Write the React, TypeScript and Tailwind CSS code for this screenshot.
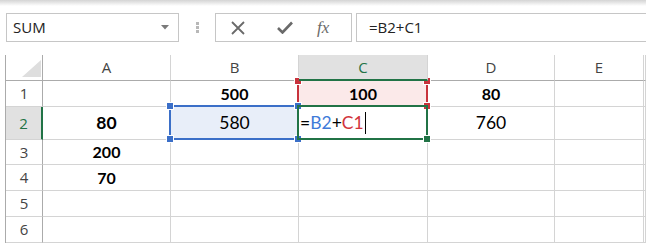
import React from "react"

const cols = ["A", "B", "C", "D", "E", ""]
const rowHeights = ["h-[26px]", "h-[33px]", "h-[25px]", "h-[26px]", "h-[26px]", "h-[26px]"]

// values per row, index = column
const data: Record<number, Record<number, { v: string; bold?: boolean }>> = {
  0: { 1: { v: "500", bold: true }, 2: { v: "100", bold: true }, 3: { v: "80", bold: true } },
  1: { 0: { v: "80", bold: true }, 1: { v: "580" }, 3: { v: "760" } },
  2: { 0: { v: "200", bold: true } },
  3: { 0: { v: "70", bold: true } },
}

const uiFont = { fontFamily: '"Open Sans", "Noto Sans", sans-serif' }
const cellFont = { fontFamily: 'Lato, "Open Sans", sans-serif' }

function Handle({ pos, color }: { pos: string; color: string }) {
  return <div className={`absolute w-[6px] h-[6px] ring-1 ring-white ${pos} ${color}`} />
}

function CellOverlay({ row, col }: { row: number; col: number }) {
  // B2 - blue referenced range
  if (row === 1 && col === 1) {
    return (
      <div className="absolute -left-[2px] -top-[2px] -right-[1px] -bottom-[1px] border-2 border-[#3b6fc8] bg-[#e8eef9] z-10">
        <Handle pos="-left-[4px] -top-[4px]" color="bg-[#3b6fc8]" />
        <Handle pos="-right-[4px] -top-[4px]" color="bg-[#3b6fc8]" />
        <Handle pos="-left-[4px] -bottom-[4px]" color="bg-[#3b6fc8]" />
        <Handle pos="-right-[4px] -bottom-[4px]" color="bg-[#3b6fc8]" />
      </div>
    )
  }
  // C1 - red referenced range
  if (row === 0 && col === 2) {
    return (
      <div className="absolute -left-[2px] -top-[2px] -right-[1px] -bottom-[1px] border-2 border-[#c8333c] bg-[#fbe9e9] z-10">
        <Handle pos="-left-[4px] -top-[3px]" color="bg-[#c8333c]" />
        <Handle pos="-right-[4px] -top-[3px]" color="bg-[#c8333c]" />
        <Handle pos="-left-[4px] -bottom-[4px]" color="bg-[#c8333c]" />
        <Handle pos="-right-[4px] -bottom-[4px]" color="bg-[#c8333c]" />
      </div>
    )
  }
  // C2 - active cell
  if (row === 1 && col === 2) {
    return (
      <div className="absolute -left-[2px] -top-[2px] -right-[1px] -bottom-[1px] border-2 border-[#217346] z-20">
        <Handle pos="-right-[4px] -bottom-[4px]" color="bg-[#217346]" />
      </div>
    )
  }
  return null
}

function CellContent({ row, col }: { row: number; col: number }) {
  if (row === 1 && col === 2) {
    return (
      <div className="relative z-30 w-full flex items-center pl-[1px] text-[17.5px] text-black">
        <span>=</span>
        <span className="text-[#3f7bd9]">B2</span>
        <span>+</span>
        <span className="text-[#d1343b]">C1</span>
        <span className="ml-[1px] w-[1px] h-[22px] bg-black" />
      </div>
    )
  }
  const cell = data[row]?.[col]
  if (!cell) return null
  return (
    <span
      className={`relative z-30 ${row === 1 ? "text-[17.5px]" : "text-[16px]"} ${
        cell.bold ? "font-bold" : "font-normal"
      } text-black`}
    >
      {cell.v}
    </span>
  )
}

export default function App() {
  return (
    <div className="w-[646px] h-[243px] bg-white overflow-hidden" style={uiFont}>
      {/* top shadow */}
      <div className="h-[6px] bg-gradient-to-b from-[#d4d4d4] to-white" />

      {/* formula bar */}
      <div className="flex items-center mt-[7px] h-[29px]">
        <div className="ml-[6px] w-[173px] h-[29px] border border-[#c6c6c6] flex items-center justify-between pl-[6px] pr-[9px]">
          <span className="text-[15px] text-[#222]">SUM</span>
          <svg width="8" height="5" viewBox="0 0 8 5">
            <path d="M0 0 L8 0 L4 4.5 Z" fill="#7a7a7a" />
          </svg>
        </div>
        <div className="ml-[17px] flex flex-col gap-[1.5px]">
          <div className="w-[3px] h-[2.5px] bg-[#b8b8b8]" />
          <div className="w-[3px] h-[2.5px] bg-[#b8b8b8]" />
          <div className="w-[3px] h-[2.5px] bg-[#b8b8b8]" />
        </div>
        <div className="ml-[16px] w-[137px] h-[29px] border border-[#c6c6c6] flex items-center">
          <svg className="ml-[15px]" width="14" height="14" viewBox="0 0 14 14">
            <path d="M1 1 L13 13 M13 1 L1 13" stroke="#6a6a6a" strokeWidth="1.8" />
          </svg>
          <svg className="ml-[32px]" width="16" height="13" viewBox="0 0 16 13">
            <path d="M1 7 L5.5 11.5 L15 1.5" stroke="#6a6a6a" strokeWidth="2.6" fill="none" />
          </svg>
          <span
            className="ml-[24px] italic text-[17px] text-[#6a6a6a] leading-none"
            style={{ fontFamily: '"Liberation Serif", serif' }}
          >
            fx
          </span>
        </div>
        <div className="ml-[4px] flex-1 h-[29px] border border-r-0 border-[#c6c6c6] flex items-center pl-[12px]">
          <span className="text-[15px] text-[#222]">=B2+C1</span>
        </div>
      </div>

      {/* sheet grid */}
      <div
        className="mt-[13px] ml-[5px] border-l border-[#ababab] grid grid-cols-[37px_128px_128px_129px_127px_89px_1fr] grid-rows-[26px_26px_33px_25px_26px_26px_26px]"
      >
        {/* corner */}
        <div className="border-r border-b border-[#ababab] bg-white flex items-end justify-end pr-[1px] pb-[3px]">
          <svg width="19" height="17" viewBox="0 0 19 17">
            <path d="M19 0 L19 17 L0 17 Z" fill="#dedede" />
          </svg>
        </div>
        {cols.map((c, i) => (
          <div
            key={c + i}
            className={`relative flex items-center justify-center text-[15px] border-r border-[#d4d4d4] ${
              i === 2
                ? "bg-[#e1e1e1] text-[#217346] border-b-2 border-b-[#217346] z-40"
                : "bg-white text-[#444] border-b border-b-[#ababab]"
            }`}
          >
            {c}
          </div>
        ))}

        {rowHeights.map((h, r) => (
          <React.Fragment key={r}>
            <div
              className={`${h} flex items-center justify-center text-[15px] border-b border-[#d4d4d4] ${
                r === 1
                  ? "bg-[#e1e1e1] text-[#217346] border-r-2 border-r-[#217346]"
                  : "bg-white text-[#444] border-r border-r-[#ababab]"
              }`}
            >
              {r + 1}
            </div>
            {cols.map((_, c) => (
              <div
                key={c}
                className="relative flex items-center justify-center border-r border-b border-[#d4d4d4]"
                style={cellFont}
              >
                <CellOverlay row={r} col={c} />
                <CellContent row={r} col={c} />
              </div>
            ))}
          </React.Fragment>
        ))}
      </div>
    </div>
  )
}
